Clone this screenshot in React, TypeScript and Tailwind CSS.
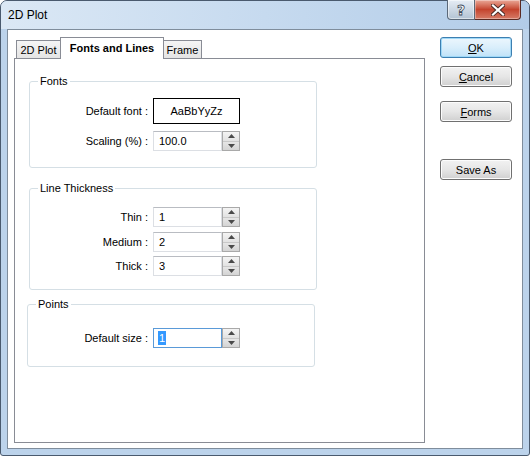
import React from "react";

const F = { fontFamily: '"Liberation Sans", Arial, sans-serif' };

function Spin({ value, focused = false, selected = false }: { value: string; focused?: boolean; selected?: boolean }) {
  return (
    <div className="flex h-[20px] w-[87px]">
      <div
        className={
          "flex w-[69px] items-center border pl-[5px] bg-white " +
          (focused
            ? "border-[#5a9ad8]"
            : "border-[#dcdfe4] border-t-[#b9bcc2]")
        }
      >
        {selected ? (
          <span className="bg-[#3399ff] text-white leading-[14px] px-[1px] -ml-[1px]">{value}</span>
        ) : (
          <span className="leading-[14px]">{value}</span>
        )}
      </div>
      <div className="flex w-[18px] flex-col border border-[#a9a9a9]">
        <div className="flex flex-1 items-center justify-center bg-gradient-to-b from-[#f4f4f4] to-[#e2e2e2] border-b border-[#c8c8c8]">
          <svg width="7" height="4" viewBox="0 0 7 4">
            <path d="M3.5 0 L7 4 L0 4 Z" fill="#4a4a4a" />
          </svg>
        </div>
        <div className="flex flex-1 items-center justify-center bg-gradient-to-b from-[#e6e6e6] to-[#d4d4d4]">
          <svg width="7" height="4" viewBox="0 0 7 4">
            <path d="M0 0 L7 0 L3.5 4 Z" fill="#4a4a4a" />
          </svg>
        </div>
      </div>
    </div>
  );
}

function Group({
  title,
  className,
  children,
}: {
  title: string;
  className: string;
  children: React.ReactNode;
}) {
  return (
    <div className={"relative rounded-[3px] border border-[#d5dfe5] " + className}>
      <span className="absolute left-[8px] top-[-8px] bg-white px-[2px] leading-[14px] text-black">
        {title}
      </span>
      {children}
    </div>
  );
}

function Row({ label, labelW, children, className = "" }: { label: string; labelW: string; children: React.ReactNode; className?: string }) {
  return (
    <div className={"flex items-center " + className}>
      <div className={"text-right leading-[14px] " + labelW}>{label}</div>
      <div className="ml-[5px]">{children}</div>
    </div>
  );
}

function Btn({ children, primary = false, className = "" }: { children: React.ReactNode; primary?: boolean; className?: string }) {
  return (
    <div
      className={
        "flex h-[21px] w-[72px] items-center justify-center rounded-[3px] border " +
        (primary
          ? "border-[#3c7fb1] bg-gradient-to-b from-[#ecf6fd] via-[#d9eefb] to-[#bfe2f8] shadow-[inset_0_0_0_1px_#9fd8f7]"
          : "border-[#707070] bg-gradient-to-b from-[#f2f2f2] via-[#e6e6e6] to-[#d0d0d0] shadow-[inset_0_0_0_1px_#fcfcfc]") +
        " " +
        className
      }
    >
      <span className="leading-[14px]">{children}</span>
    </div>
  );
}

export default function App() {
  return (
    <div className="h-[458px] w-[531px] bg-white text-[11px] text-black" style={F}>
      <div className="flex h-[456px] w-[530px] flex-col rounded-t-[7px] rounded-b-[3px] border border-[#4a5a6e] bg-[#bcd3eb]">
        {/* title bar */}
        <div className="flex h-[28px] rounded-t-[6px] bg-gradient-to-r from-[#dbe8f5] via-[#c6daef] to-[#b2cce8]">
          <div className="pl-[7px] pt-[6px] text-[12px] leading-[16px]">2D Plot</div>
          <div className="ml-auto mr-[8px] -mt-px flex h-[20px]">
            <div className="flex w-[28px] items-center justify-center rounded-bl-[4px] border border-[#5b6878] border-t-0 bg-gradient-to-b from-[#e6edf5] via-[#cdd8e4] to-[#b3c3d4] shadow-[inset_0_0_0_1px_rgba(255,255,255,0.5)]">
              <span
                className="text-[14px] font-bold leading-[14px] text-white"
                style={{ WebkitTextStroke: "0.8px #3d4a5a", fontFamily: '"DejaVu Sans", sans-serif' }}
              >
                ?
              </span>
            </div>
            <div className="flex w-[46px] items-center justify-center rounded-br-[4px] border border-l-0 border-t-0 border-[#5a2a22] bg-gradient-to-b from-[#e9a797] via-[#c4432d] to-[#d67a66] shadow-[inset_0_0_0_1px_rgba(255,255,255,0.35)]">
              <svg width="14" height="12" viewBox="0 0 14 12">
                <path d="M2 1.5 L12 10.5 M12 1.5 L2 10.5" stroke="#4a2a26" strokeWidth="4" strokeLinecap="square" />
                <path d="M2 1.5 L12 10.5 M12 1.5 L2 10.5" stroke="#ffffff" strokeWidth="2.2" strokeLinecap="square" />
              </svg>
            </div>
          </div>
        </div>
        {/* client */}
        <div className="ml-[6px] flex h-[420px] w-[516px] border border-[#7f8d9c] bg-white">
          {/* left */}
          <div className="flex flex-col pl-[6px] pt-[7px]">
            <div className="flex h-[21px] items-end pl-[2px]">
              <div className="flex h-[18px] w-[44px] items-center justify-center border-l border-t border-[#898c95] bg-gradient-to-b from-[#f5f5f5] to-[#e4e4e4]">
                <span className="leading-[14px]">2D Plot</span>
              </div>
              <div className="relative z-10 -mb-px flex h-[22px] w-[104px] items-center justify-center border-x border-t border-[#898c95] bg-white pb-[2px]">
                <span className="font-bold leading-[14px]">Fonts and Lines</span>
              </div>
              <div className="flex h-[18px] w-[38px] items-center justify-center border-r border-t border-[#898c95] bg-gradient-to-b from-[#f5f5f5] to-[#e4e4e4]">
                <span className="leading-[14px]">Frame</span>
              </div>
            </div>
            <div className="h-[385px] w-[411px] border border-[#898c95] bg-white">
              <Group title="Fonts" className="ml-[14px] mt-[22px] h-[87px] w-[288px]">
                <Row label="Default font :" labelW="w-[118px]" className="mt-[16px]">
                  <div className="flex h-[26px] w-[87px] items-center justify-center border border-black">
                    <span className="leading-[14px]">AaBbYyZz</span>
                  </div>
                </Row>
                <Row label="Scaling (%) :" labelW="w-[118px]" className="mt-[7px]">
                  <Spin value="100.0" />
                </Row>
              </Group>
              <Group title="Line Thickness" className="ml-[14px] mt-[20px] h-[102px] w-[288px]">
                <Row label="Thin :" labelW="w-[118px]" className="mt-[18px]">
                  <Spin value="1" />
                </Row>
                <Row label="Medium :" labelW="w-[118px]" className="mt-[5px]">
                  <Spin value="2" />
                </Row>
                <Row label="Thick :" labelW="w-[118px]" className="mt-[4px]">
                  <Spin value="3" />
                </Row>
              </Group>
              <Group title="Points" className="ml-[12px] mt-[14px] h-[63px] w-[288px]">
                <Row label="Default size :" labelW="w-[120px]" className="mt-[23px]">
                  <Spin value="1" focused selected />
                </Row>
              </Group>
            </div>
          </div>
          {/* right buttons */}
          <div className="ml-[15px] flex flex-col pt-[7px]">
            <Btn primary>
              <span className="underline">O</span>K
            </Btn>
            <Btn className="mt-[8px]">
              <span className="underline">C</span>ancel
            </Btn>
            <Btn className="mt-[14px]">
              <span className="underline">F</span>orms
            </Btn>
            <Btn className="mt-[37px]">Save As</Btn>
          </div>
        </div>
      </div>
    </div>
  );
}
